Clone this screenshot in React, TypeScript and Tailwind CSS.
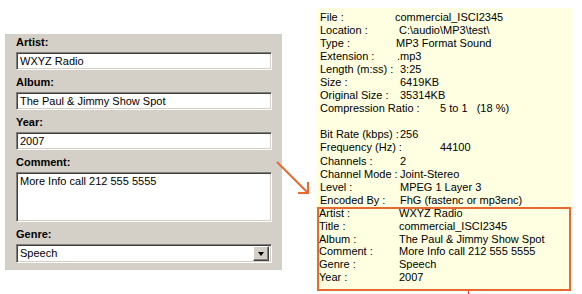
const sunken =
  "bg-white border border-t-[#808080] border-l-[#808080] border-b-white border-r-white shadow-[inset_1px_1px_0_#404040,inset_-1px_-1px_0_#d4d0c8]";

function Field({ label, value, tall }: { label: string; value: string; tall?: boolean }) {
  return (
    <div className="mb-[6px]">
      <div className="font-bold leading-[13px] mb-[3px]">{label}</div>
      <div className={`${sunken} ${tall ? "h-[50px] pt-[2px]" : "h-[18px] flex items-center"} px-[3px] leading-[13px]`}>
        {value}
      </div>
    </div>
  );
}

type Row = { label: string; value: string; w?: string };

const infoRows: Row[] = [
  { label: "File :", value: "commercial_ISCI2345", w: "w-[75px]" },
  { label: "Location :", value: "C:\\audio\\MP3\\test\\", w: "w-[79px]" },
  { label: "Type :", value: "MP3 Format Sound", w: "w-[76px]" },
  { label: "Extension :", value: ".mp3", w: "w-[77px]" },
  { label: "Length (m:ss) :", value: "3:25" },
  { label: "Size :", value: "6419KB" },
  { label: "Original Size :", value: "35314KB" },
  { label: "Compression Ratio :", value: "5 to 1   (18 %)", w: "w-[120px]" },
  { label: "", value: "" },
  { label: "Bit Rate (kbps) :", value: "256" },
  { label: "Frequency (Hz) :", value: "44100", w: "w-[120px]" },
  { label: "Channels :", value: "2" },
  { label: "Channel Mode :", value: "Joint-Stereo" },
  { label: "Level :", value: "MPEG 1 Layer 3" },
  { label: "Encoded By :", value: "FhG (fastenc or mp3enc)" },
];

const tagRows: Row[] = [
  { label: "Artist :", value: "WXYZ Radio" },
  { label: "Title :", value: "commercial_ISCI2345" },
  { label: "Album :", value: "The Paul & Jimmy Show Spot" },
  { label: "Comment :", value: "More Info call 212 555 5555" },
  { label: "Genre :", value: "Speech" },
  { label: "Year :", value: "2007" },
];

export default function App() {
  return (
    <div
      className="relative w-[582px] h-[294px] bg-white text-black text-[11px] overflow-hidden"
      style={{ fontFamily: '"Liberation Sans", Arial, sans-serif' }}
    >
      <div className="flex items-start">
        {/* tag editor panel */}
        <div className="mt-[34px] ml-[5px] w-[277px] bg-[#d4d0c8] pt-[2px] pb-[1px] pl-[11px] pr-[10px]">
          <Field label="Artist:" value="WXYZ Radio" />
          <Field label="Album:" value="The Paul & Jimmy Show Spot" />
          <Field label="Year:" value="2007" />
          <Field label="Comment:" value="More Info call 212 555 5555" tall />
          <div>
            <div className="font-bold leading-[13px] mb-[3px]">Genre:</div>
            <div className={`${sunken} h-[19px] flex items-center justify-between pl-[3px] pr-[2px]`}>
              <span className="leading-[13px]">Speech</span>
              <span className="w-[16px] h-[15px] bg-[#d4d0c8] border border-t-white border-l-white border-b-[#404040] border-r-[#404040] shadow-[inset_-1px_-1px_0_#808080] flex items-center justify-center">
                <span className="w-0 h-0 border-l-[3.5px] border-r-[3.5px] border-t-[4px] border-l-transparent border-r-transparent border-t-black" />
              </span>
            </div>
          </div>
          <div className="h-[6px]" />
        </div>

        {/* file info tooltip */}
        <div className="mt-[8px] ml-[33px] w-[257px] h-[283px] bg-[#ffffe1] pt-[2.5px]">
          <div className="pl-[5px] leading-[13.1px]">
            {infoRows.map((r, i) => (
              <div key={i} className="flex h-[13.1px] whitespace-pre">
                <span className={`${r.w ?? "w-[80px]"} shrink-0`}>{r.label}</span>
                <span>{r.value}</span>
              </div>
            ))}
          </div>
          <div className="ml-[2px] mr-[1px] border-2 border-[#e8692f] pb-[5px]">
            <div className="-mt-[1.5px] leading-[12.7px]">
              {tagRows.map((r) => (
                <div key={r.label} className="flex h-[12.7px] whitespace-pre">
                  <span className="w-[80px] shrink-0">{r.label}</span>
                  <span>{r.value}</span>
                </div>
              ))}
            </div>
          </div>
        </div>
      </div>

      {/* arrow */}
      <svg className="absolute left-0 top-0" width="582" height="294" viewBox="0 0 582 294">
        <g stroke="#e8692f" strokeWidth="2" fill="none">
          <line x1="277" y1="162" x2="307" y2="192" />
          <line x1="298" y1="193" x2="309" y2="193" />
          <line x1="308" y1="182" x2="308" y2="194" />
        </g>
      </svg>
      <span className="absolute left-[468px] top-[291px] w-[1px] h-[3px] bg-[#e33]" />
    </div>
  );
}
